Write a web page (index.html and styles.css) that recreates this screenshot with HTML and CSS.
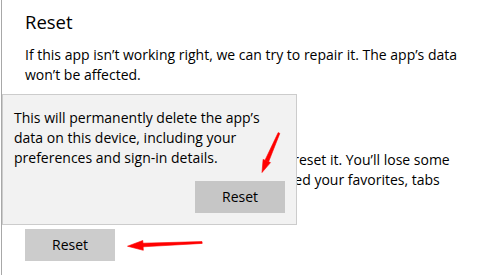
FILE: index.html
```html
<!DOCTYPE html>
<html lang="en">
<head>
<meta charset="utf-8">
<title>Reset</title>
<link rel="stylesheet" href="styles.css">
</head>
<body>
<div class="page">
  <h2 class="title">Reset</h2>
  <p class="desc">If this app isn’t working right, we can try to repair it. The app’s data<br>won’t be affected.</p>
  <button class="btn">Repair</button>
  <p class="desc desc-reset"><span class="lead">If Microsoft Edge still isn’t working right,</span> reset it. You’ll lose some<br>of your data, like browser history, but saved your favorites, tabs<br>and passwords will stay.</p>
  <button class="btn">Reset</button>
</div>

<div class="flyout">
  <p class="flyout-text">This will permanently delete the app’s<br>data on this device, including your<br>preferences and sign-in details.</p>
  <div class="flyout-actions"><button class="btn btn-flyout">Reset</button></div>
</div>

<svg class="annot" width="487" height="275" viewBox="0 0 487 275" aria-hidden="true">
  <polygon class="arrow" points="278.2,132.6 279.8,133.4 268.6,161.8 265.0,160.2"/>
  <polygon class="arrow" points="270.5,162.6 262,172.5 263.1,159.4"/>
  <polygon class="arrow" points="202,241.6 202.2,243.4 143,246.8 142.8,243.2"/>
  <polygon class="arrow" points="143.3,250.3 127.5,246.2 142.8,240.5"/>
</svg>
</body>
</html>
```

FILE: styles.css
```css
html, body {
  margin: 0;
  padding: 0;
  background: #ffffff;
}

body {
  font-family: "Open Sans", "Noto Sans", sans-serif;
  color: #000000;
  width: 487px;
  height: 275px;
  overflow: hidden;
  position: relative;
}

.page {
  margin-left: 1px;
  border-left: 1px solid #a8a8a8;
  height: 275px;
  box-sizing: border-box;
  padding: 8px 0 0 23px;
}

.title {
  margin: 0;
  font-size: 18.5px;
  font-weight: 400;
  line-height: 28px;
}

.desc {
  margin: 9px 0 0;
  font-size: 14px;
  line-height: 20px;
  white-space: nowrap;
}

.desc-reset {
  margin-top: 20px;
}

.lead {
  word-spacing: 1px;
}

.btn {
  display: block;
  width: 90px;
  height: 32px;
  padding: 0;
  border: 0;
  background: #cccccc;
  color: #000000;
  font-family: "Open Sans", "Noto Sans", sans-serif;
  font-size: 14px;
  line-height: 32px;
  text-align: center;
}

.page > .btn {
  margin-top: 13px;
}

.page > .desc-reset + .btn {
  margin-top: 19px;
}

.flyout {
  position: absolute;
  left: 2px;
  top: 94px;
  width: 295px;
  height: 131px;
  box-sizing: border-box;
  border: 1px solid #cccccc;
  background: #f2f2f2;
  padding: 13px 11px 11px 11px;
  display: flex;
  flex-direction: column;
  justify-content: space-between;
}

.flyout-text {
  margin: 0;
  font-size: 14px;
  line-height: 20px;
  white-space: nowrap;
}

.flyout-actions {
  display: flex;
  justify-content: flex-end;
}

.btn-flyout {
  background: #c6c6c6;
}

.annot {
  position: absolute;
  left: 0;
  top: 0;
  pointer-events: none;
}

.arrow {
  fill: #ff0000;
  stroke: #ff0000;
  stroke-width: 0.6;
  stroke-linejoin: round;
}
```
